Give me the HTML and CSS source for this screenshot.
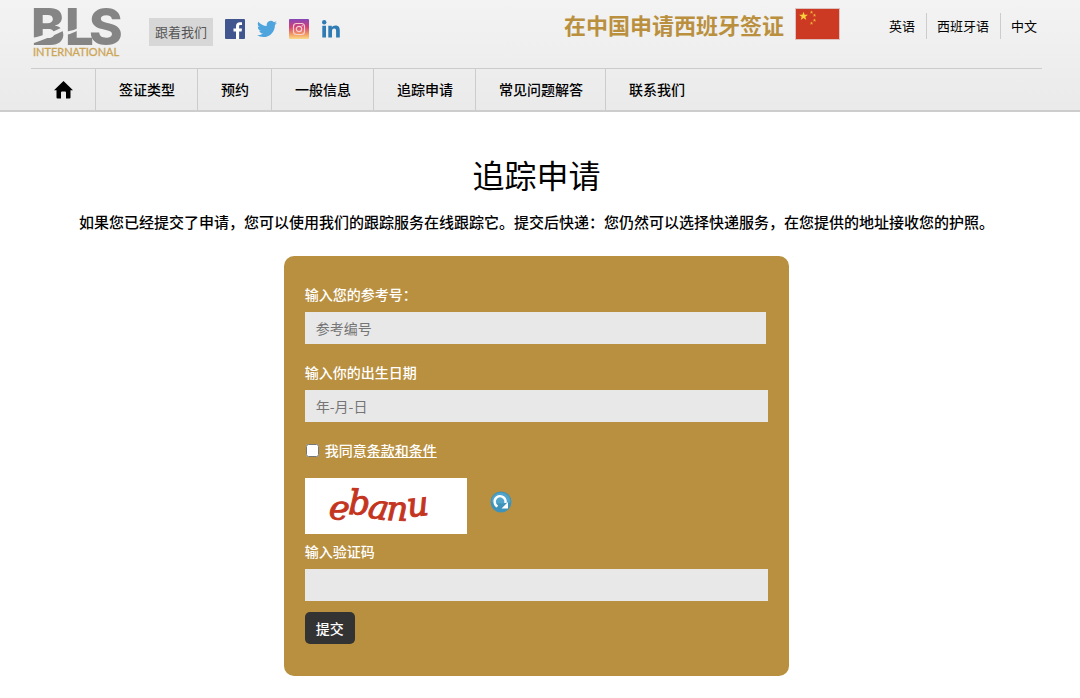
FILE: index.html
```html
<!DOCTYPE html>
<html lang="zh-CN">
<head>
<meta charset="UTF-8">
<meta name="viewport" content="width=device-width, initial-scale=1.0">
<title>追踪申请</title>
<link rel="stylesheet" href="styles.css">
</head>
<body>

<header class="header">
  <div class="top">
    <a class="logo" href="#" aria-label="BLS International">
      <svg width="92" height="60" viewBox="0 0 92 60">
        <g class="logo-name">
          <text x="0" y="45">B</text>
          <text x="34" y="45">L</text>
          <text x="58" y="45">S</text>
        </g>
        <path d="M0 38Q14 36 32 27L32 31Q18 38 0 44ZM34 32Q42 31 50 27L46 31Q40 34 34 35Z" fill="#f0f0f0"/>
        <text class="logo-sub" x="2" y="56">INTERNATIONAL</text>
      </svg>
    </a>
    <span class="follow">跟着我们</span>
    <div class="social">
      <a href="#" aria-label="Facebook">
        <svg width="20" height="20" viewBox="0 0 20 20">
          <rect width="20" height="20" rx="1" fill="#41568f"/>
          <path d="M11 20v-7.500H8.500V9.500H11V7.200C11 4.500 12.500 3.200 15 3.200h2v2.900h-1.500c-1.100 0-1.400.5-1.400 1.400v2H17l-.4 3h-2.500V20z" fill="#fff"/>
        </svg>
      </a>
      <a href="#" aria-label="Twitter">
        <svg width="20" height="20" viewBox="0 0 24 24">
          <path d="M23.900 4.600a10 10 0 0 1-2.800.8 4.900 4.900 0 0 0 2.200-2.700 9.900 9.900 0 0 1-3.100 1.200 4.900 4.900 0 0 0-8.400 4.500A14 14 0 0 1 1.700 3.200a4.900 4.900 0 0 0 1.500 6.500 4.900 4.900 0 0 1-2.200-.6v.1a4.900 4.900 0 0 0 3.900 4.800 5 5 0 0 1-2.200.1 4.900 4.900 0 0 0 4.600 3.400A9.900 9.900 0 0 1 0 19.500 14 14 0 0 0 7.500 21.700c9.100 0 14-7.500 14-14v-.6a10 10 0 0 0 2.400-2.500z" fill="#4ea4dc"/>
        </svg>
      </a>
      <a href="#" aria-label="Instagram">
        <svg width="20" height="20" viewBox="0 0 20 20">
          <defs>
            <linearGradient id="insta" x1="0" y1="0" x2="0" y2="1">
              <stop offset="0" stop-color="#8446b8"/>
              <stop offset="0.400" stop-color="#d33f78"/>
              <stop offset="0.750" stop-color="#f19a60"/>
              <stop offset="1" stop-color="#fbd98a"/>
            </linearGradient>
          </defs>
          <rect width="20" height="20" rx="1" fill="url(#insta)"/>
          <g fill="none" stroke="#f7cfd0" stroke-width="1.200">
            <rect x="4.500" y="4.500" width="11" height="11" rx="3"/>
            <circle cx="10" cy="10" r="2.700"/>
          </g>
          <circle cx="13.200" cy="6.800" r="0.700" fill="#f7cfd0"/>
        </svg>
      </a>
      <a href="#" aria-label="LinkedIn">
        <svg width="20" height="20" viewBox="0 0 20 20" fill="#2f7cb5">
          <circle cx="3.200" cy="3.200" r="2.200"/>
          <path d="M1.300 6.800h3.700V18.500H1.300zM7.300 6.800h3.500v1.600c.7-1.200 2-1.900 3.600-1.900 3.500 0 4.400 2.200 4.400 5.400v6.600h-3.700v-5.900c0-1.800-.2-3-1.900-3s-2.200 1.300-2.200 3v5.900H7.300z"/>
        </svg>
      </a>
    </div>
    <div class="country">
      <span>在中国申请西班牙签证</span>
      <svg width="45" height="32" viewBox="0 0 45 32">
        <rect x="0.500" y="0.500" width="44" height="31" fill="#cc3a24" stroke="#dcc3c0"/>
        <g fill="#f8d33c">
          <path d="M8.500 3.800l1.100 3h3.300l-2.600 2 1 3.200-2.800-1.900L5.700 12l1-3.200-2.600-2h3.300z"/>
          <path id="star" d="M16.500 2.500l.5 1.200h1.200l-1 .8.400 1.300-1.100-.8-1.100.8.400-1.300-1-.8H16z" opacity="0.800"/>
          <use href="#star" x="3" y="3"/>
          <use href="#star" x="3" y="8"/>
          <use href="#star" x="0" y="11"/>
        </g>
      </svg>
    </div>
    <div class="languages">
      <a href="#">英语</a>
      <a href="#">西班牙语</a>
      <a href="#">中文</a>
    </div>
  </div>
  <nav class="nav">
    <a class="home" href="#" aria-label="首页">
      <svg width="19" height="18" viewBox="0 0 19 18">
        <path d="M9.500 0L19 9.200H16.500V16.500Q16.500 17.500 15.500 17.500H12V11.500Q12 10.500 11 10.500H8Q7 10.500 7 11.500V17.500H3.500Q2.500 17.500 2.500 16.500V9.200H0Z"/>
      </svg>
    </a>
    <a href="#">签证类型</a>
    <a href="#">预约</a>
    <a href="#">一般信息</a>
    <a href="#">追踪申请</a>
    <a href="#">常见问题解答</a>
    <a href="#">联系我们</a>
  </nav>
</header>

<main class="content">
  <h1>追踪申请</h1>
  <p class="intro">如果您已经提交了申请，您可以使用我们的跟踪服务在线跟踪它。提交后快递：您仍然可以选择快递服务，在您提供的地址接收您的护照。</p>

  <form class="track-form">
    <label for="reference">输入您的参考号：</label>
    <input class="field reference" type="text" id="reference" placeholder="参考编号">

    <label for="birth">输入你的出生日期</label>
    <input class="field" type="text" id="birth" placeholder="年-月-日">

    <div class="terms">
      <input type="checkbox" id="agree">
      <label for="agree">我同意<a href="#">条款和条件</a></label>
    </div>

    <div class="captcha">
      <svg class="captcha-image" width="162" height="56" viewBox="0 0 162 56">
        <text transform="translate(23 40) rotate(8)">e</text>
        <text transform="translate(43 36) rotate(2)">b</text>
        <text transform="translate(62 39) rotate(10)">a</text>
        <text transform="translate(81 42) rotate(2)">n</text>
        <text transform="translate(103 39) rotate(-6)">u</text>
      </svg>
      <button class="refresh" type="button" aria-label="刷新">
        <svg width="22" height="22" viewBox="0 0 22 22">
          <circle cx="11" cy="11" r="10.500" fill="#3f93bb"/>
          <path d="M1.500 11a9.500 9.500 0 0 1 19 0q-9 3-19 0z" fill="#51a5ca"/>
          <path d="M7.500 15.500A5.500 5.500 0 1 1 15.500 9.500V12" fill="none" stroke="#fff" stroke-width="2.400"/>
          <path d="M18 11V17.500H11.500z" fill="#fff"/>
        </svg>
      </button>
    </div>

    <label for="code">输入验证码</label>
    <input class="field code" type="text" id="code">

    <button class="submit" type="submit">提交</button>
  </form>
</main>

</body>
</html>
```
FILE: styles.css
```css
* {
  box-sizing: border-box;
}
body {
  margin: 0;
  font-family: "Noto Sans CJK SC", sans-serif;
  font-size: 14px;
  font-weight: 500;
  line-height: 20px;
  color: #000;
  background-color: #fff;
}
a {
  color: inherit;
  text-decoration: none;
}
svg {
  display: block;
}
.header {
  padding: 0 38px 0 31px;
  background: linear-gradient(#f3f3f3, #eaeaea);
  border-bottom: 2px solid #cdcdcd;
}
.top {
  display: flex;
  align-items: flex-start;
  height: 68px;
}
.logo-name {
  font-family: Inter, sans-serif;
  font-size: 51px;
  font-weight: 800;
  fill: #858585;
}
.logo-sub {
  font-family: Lato, sans-serif;
  font-size: 11px;
  font-weight: 400;
  fill: #cda655;
  stroke: #cda655;
  stroke-width: 0.3;
}
.follow {
  margin: 18px 12px 0 26px;
  padding: 4px 6px;
  font-size: 13px;
  font-weight: 400;
  color: #555;
  background-color: #d7d7d7;
}
.social {
  display: flex;
  gap: 12px;
  margin-top: 19px;
}
.country {
  display: flex;
  align-items: center;
  gap: 11px;
  margin: 8px 39px 0 auto;
  font-size: 22px;
  font-weight: 700;
  line-height: 32px;
  color: #ba903f;
}
.languages {
  display: flex;
  margin: 13px -6px 0 0;
  font-size: 13px;
  font-weight: 400;
  line-height: 26px;
}
.languages a {
  padding: 0 11px 0 10px;
  border-right: 1px solid #ccc;
}
.languages a:last-child {
  border-right: none;
}
.nav {
  display: flex;
  border-top: 1px solid #ccc;
}
.nav a {
  padding: 0 22px 0 23px;
  line-height: 41px;
  border-right: 1px solid #ccc;
}
.nav a:last-child {
  border-right: none;
}
.nav a:hover {
  background-color: #e0e0e0;
}
.nav .home {
  display: flex;
  align-items: center;
}
.content {
  padding: 38px 38px 21px 31px;
}
h1 {
  margin: 0;
  font-size: 32px;
  font-weight: 400;
  line-height: 48px;
  text-align: center;
}
.intro {
  margin: 12px 0 22px;
  font-size: 15px;
  line-height: 24px;
  text-align: center;
}
.track-form {
  width: 50%;
  margin: 0 auto;
  padding: 28px 21px 32px;
  color: #fff;
  background-color: #b9903f;
  border-radius: 10px;
}
.track-form label {
  display: block;
}
.field {
  display: block;
  width: 100%;
  height: 32px;
  margin: 8px 0 18px;
  padding: 0 11px;
  font: inherit;
  font-weight: 400;
  color: #333;
  background-color: #e8e8e8;
  border: none;
}
.field::placeholder {
  color: #757575;
}
.reference {
  width: calc(100% - 2px);
}
.terms {
  display: flex;
  align-items: center;
  gap: 5px;
}
.terms input {
  width: 13px;
  height: 13px;
  margin: 0 1px;
}
.terms a {
  text-decoration: underline;
}
.captcha {
  display: flex;
  align-items: center;
  gap: 23px;
  margin: 18px 0 7px;
}
.captcha-image {
  font-family: "DejaVu Serif", serif;
  font-size: 34px;
  font-style: italic;
  font-weight: 400;
  fill: #c4351f;
  stroke: #c4351f;
  background-color: #fff;
}
.refresh {
  margin-bottom: 8px;
  padding: 0;
  background: none;
  border: none;
  cursor: pointer;
}
.code {
  margin-bottom: 11px;
}
.submit {
  display: block;
  height: 32px;
  padding: 0 11px;
  font: inherit;
  color: #fff;
  background-color: #333;
  border: none;
  border-radius: 5px;
  cursor: pointer;
}
```
